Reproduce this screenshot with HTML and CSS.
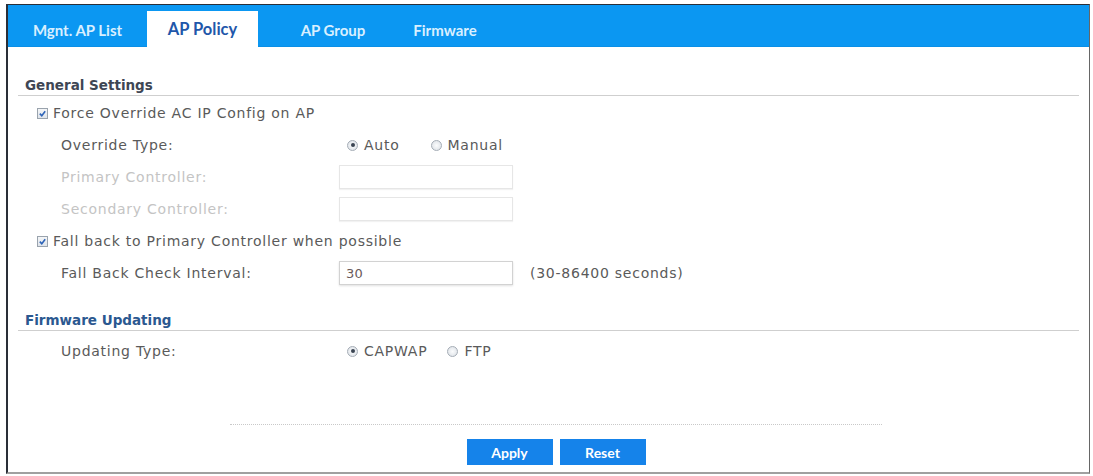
FILE: index.html
```html
<!DOCTYPE html>
<html lang="en">
<head>
  <meta charset="UTF-8">
  <title>AP Policy</title>
  <link rel="stylesheet" href="styles.css">
</head>
<body>
  <div class="frame">
    <div class="tabs">
      <div class="tab t1">Mgnt. AP List</div>
      <div class="tab t2 active">AP Policy</div>
      <div class="tab t3">AP Group</div>
      <div class="tab t4">Firmware</div>
    </div>

    <div class="content">
      <div class="section-title">General Settings</div>

      <div class="row check-row first">
        <span class="cb"><svg viewBox="0 0 10 10"><path d="M2 5.2 L4.2 7.4 L8 2.6" /></svg></span>
        <span>Force Override AC IP Config on AP</span>
      </div>
      <div class="row">
        <div class="label">Override Type:</div>
        <div class="value">
          <span class="radio on first-radio"></span><span class="opt">Auto</span>
          <span class="radio gap"></span><span class="opt">Manual</span>
        </div>
      </div>
      <div class="row">
        <div class="label disabled">Primary Controller:</div>
        <div class="value"><div class="field disabled-field"></div></div>
      </div>
      <div class="row">
        <div class="label disabled">Secondary Controller:</div>
        <div class="value"><div class="field disabled-field"></div></div>
      </div>
      <div class="row check-row">
        <span class="cb"><svg viewBox="0 0 10 10"><path d="M2 5.2 L4.2 7.4 L8 2.6" /></svg></span>
        <span>Fall back to Primary Controller when possible</span>
      </div>
      <div class="row">
        <div class="label">Fall Back Check Interval:</div>
        <div class="value">
          <div class="field">30</div>
          <span class="hint">(30-86400 seconds)</span>
        </div>
      </div>

      <div class="section-title blue second">Firmware Updating</div>
      <div class="row after-title">
        <div class="label">Updating Type:</div>
        <div class="value">
          <span class="radio on first-radio"></span><span class="opt">CAPWAP</span>
          <span class="radio gap-small"></span><span class="opt">FTP</span>
        </div>
      </div>

      <div class="actions">
        <button class="btn">Apply</button>
        <button class="btn">Reset</button>
      </div>
    </div>
  </div>
</body>
</html>
```

FILE: styles.css
```css
* { box-sizing: border-box; margin: 0; padding: 0; }
body { background: #fff; font-family: "DejaVu Sans", sans-serif; font-size: 14px; letter-spacing: 0.75px; color: #5a5a5a; }

.frame { margin: 4px 3px 0 6px; height: 470px; border: 1px solid #2a2f38; border-left-width: 2px; border-right-color: #666;
  border-bottom: 2px solid #a0a0a0; }

/* tabs */
.tabs { display: flex; height: 42px; background: #0b97f2; border-bottom: 1px solid #0a8fe6; }
.tab { font-family: Lato, sans-serif; font-weight: bold; font-size: 15px; letter-spacing: 0; color: #d9efff; text-align: center; line-height: 50px; }
.t1 { width: 139px; }
.t2 { width: 111px; }
.t3 { width: 150px; }
.t4 { width: 74px; }
.tab.active { background: #fff; color: #1f57aa; font-size: 16.5px; margin-top: 6px; height: 37px; line-height: 36px; }

.content { padding: 0 10px; }
.section-title { margin-top: 27px; height: 22px; padding: 3px 0 0 7px; border-bottom: 1px solid #cfcfcf; font-weight: bold;
  font-size: 13.5px; letter-spacing: 0; color: #3e4654; }
.section-title.blue { color: #2b5890; }
.section-title.second { margin-top: 20px; }

.row { display: flex; align-items: center; height: 32px; }
.row.first { margin-top: 1px; }
.row.after-title { margin-top: 4px; }
.check-row { padding-left: 19px; }
.label { width: 321px; padding-left: 43px; }
.label.disabled { color: #c4c4c4; }
.value { display: flex; align-items: center; }
.opt { margin-left: 6px; }

.cb { width: 11px; height: 11px; border: 1px solid #9aa3ad; background: linear-gradient(#f4f6f8, #dfe4ea); margin-right: 5px; display: inline-flex; }
.cb svg { width: 9px; height: 9px; }
.cb path { fill: none; stroke: #2e64b8; stroke-width: 1.8; }

.radio { width: 11px; height: 11px; border-radius: 50%; border: 1px solid #a5adb6; background: radial-gradient(#fbfcfd, #d9dee4);
  position: relative; display: inline-block; }
.radio.on::after { content: ""; position: absolute; left: 2.5px; top: 2.5px; width: 4px; height: 4px; border-radius: 50%; background: #3a4452; }
.radio.first-radio { margin-left: 8px; }
.radio.gap { margin-left: 31px; }
.radio.gap-small { margin-left: 20px; }

.field { width: 174px; height: 24px; border: 1px solid #d2d2d2; box-shadow: 0 1px 2px rgba(0,0,0,0.12); padding: 4px 6px;
  color: #6a5a5a; font-size: 13px; letter-spacing: 0.3px; }
.disabled-field { border-color: #e6e6e6; box-shadow: 0 1px 1px rgba(0,0,0,0.05); }
.hint { margin-left: 17px; }

.actions { margin: 57px 197px 0 212px; border-top: 1px dotted #c9c9c9; padding-top: 14px; display: flex; justify-content: center; gap: 7px; }
.btn { width: 86px; height: 26px; background: #1583ea; color: #fff; border: none; font-family: Lato, sans-serif; font-weight: bold;
  font-size: 14px; }
```
